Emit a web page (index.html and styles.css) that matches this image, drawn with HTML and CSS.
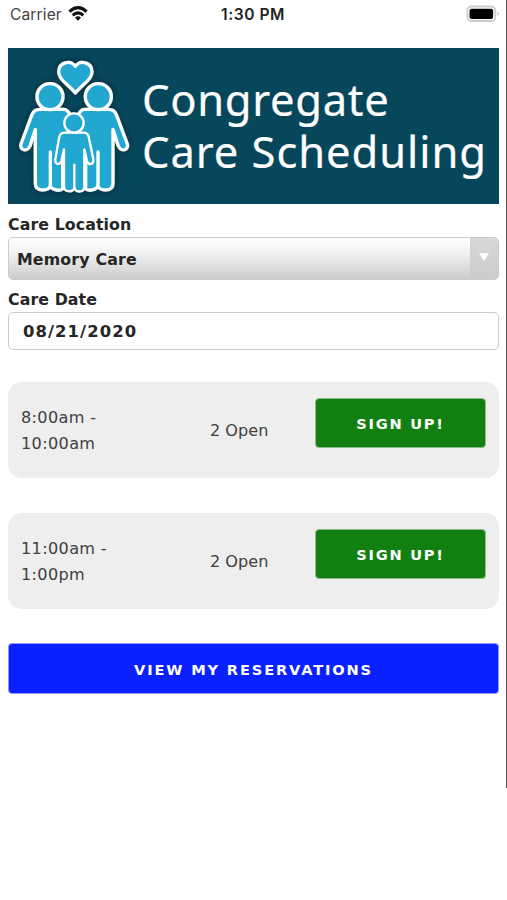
FILE: index.html
```html
<!DOCTYPE html>
<html lang="en">
<head>
<meta charset="utf-8">
<title>Congregate Care Scheduling</title>
<link rel="stylesheet" href="styles.css">
</head>
<body>
<div class="screen">
  <header class="status">
    <div class="carrier"><span>Carrier</span>
      <svg class="wifi" viewBox="0 0 60 46" width="20" height="15.3"><g fill="none" stroke="#111" stroke-width="9"><path d="M4 17Q30-7 56 17"/><path d="M14 28Q30 13 46 28"/></g><path d="M21 35Q30 27 39 35L30 44Z" fill="#111"/></svg>
    </div>
    <time class="clock">1:30 PM</time>
    <div class="power"><svg width="34" height="18" viewBox="0 0 34 18"><rect x="1.3" y="1.5" width="28" height="14.5" rx="4" fill="#fff" stroke="#ccc" stroke-width="1.8"/><rect x="3.5" y="3.7" width="23.6" height="10.2" rx="2" fill="#000"/><path d="M31.4 6.7q2.8 2 0 4z" fill="#bbb"/></svg></div>
  </header>
  <main>
    <div class="banner">
      <svg class="family" viewBox="24 24 396 468" width="132" height="156">
        <defs>
          <g id="adult">
            <path d="M120 208H191C203 208 208 218 212 228L220 250V430Q211 451 192 444Q179 454 166 449Q156 447 151 438Q147 450 127 450Q106 450 106 430V268L90 318C82 338 57 330 63 312L96 224Q102 208 120 208Z"/>
            <circle cx="150" cy="170" r="39"/>
            <path d="M151 336V438M188 350V440" fill="none"/>
          </g>
          <filter id="glow" x="-15%" y="-15%" width="130%" height="130%"><feDropShadow dx="0" dy="0" stdDeviation="9" flood-color="#001b28" flood-opacity=".7"/></filter>
        </defs>
        <g fill="#20a8d0" stroke="#fff" stroke-width="10" stroke-linejoin="round" stroke-linecap="round" filter="url(#glow)">
          <path d="M226 159Q217 148 199 132Q174 110 176 93C178 67 211 58 226 79C241 58 274 67 276 93Q278 110 253 132Q235 148 226 159Z"/>
          <use href="#adult"/>
          <use href="#adult" transform="translate(445 0) scale(-1 1)"/>
          <g stroke-width="7">
            <path d="M195 278H250Q263 278 266 290L280 358C282 374 265 377 261 363L253 328V441C253 458 230 458 224 446C216 458 193 456 192 441V328L184 363C180 377 163 373 166 358L178 290Q181 278 195 278Z"/>
            <circle cx="222" cy="249" r="29"/>
            <path d="M223 374V446" fill="none"/>
          </g>
        </g>
      </svg>
      <h1 class="title"><span class="line1">Congregate</span><span class="line2">Care Scheduling</span></h1>
    </div>
    <div class="label">Care Location</div>
    <div class="select"><span>Memory Care</span><i class="arrow"><svg width="10" height="8" viewBox="0 0 10 8"><path d="M0 0H10L5 8Z" fill="#fff"/></svg></i></div>
    <div class="label date-label">Care Date</div>
    <div class="date">08/21/2020</div>
    <section class="slot"><div class="time">8:00am -<br>10:00am</div><div class="open">2 Open</div><button class="btn signup">SIGN UP!</button></section>
    <section class="slot"><div class="time">11:00am -<br>1:00pm</div><div class="open">2 Open</div><button class="btn signup">SIGN UP!</button></section>
    <button class="btn view">VIEW MY RESERVATIONS</button>
  </main>
</div>
</body>
</html>
```
FILE: styles.css
```css
* { box-sizing: border-box; }
body { margin: 0; background: #fff; color: #262626; font-family: "DejaVu Sans", Verdana, sans-serif; }
.screen { height: 788px; border-right: 1px solid #555; }
.status { height: 48px; padding: 5px 8px 0 10px; display: grid; grid-template-columns: 1fr auto 1fr; align-items: start; font: 15.6px/20px Inter, sans-serif; }
.carrier { display: flex; gap: 6px; color: #444; letter-spacing: .1px; }
.wifi { margin-top: 1px; }
.clock { font-weight: 600; color: #222; letter-spacing: .55px; position: relative; left: -1px; }
.power { justify-self: end; height: 18px; position: relative; left: 2px; }
main { padding: 0 7px 0 8px; }
.banner { height: 156px; display: flex; background: #07475c; overflow: hidden; }
.family { flex: none; }
.title { margin: 25px 0 0 2px; font: 400 43.5px/52px "Noto Sans", sans-serif; color: #fff; white-space: nowrap; -webkit-text-stroke: .2px #fff; }
.title span { display: block; }
.line1 { letter-spacing: .7px; }
.line2 { letter-spacing: .95px; }
.label { font-size: 15.8px; line-height: 20px; font-weight: bold; margin-top: 11px; letter-spacing: .08px; }
.select { height: 43px; margin-top: 2px; border: 1px solid #ccc; border-radius: 5px; background: linear-gradient(#fff, #f2f2f2 35%, #ccc); display: flex; justify-content: space-between; align-items: center; padding-left: 8px; font-weight: bold; font-size: 15.8px; letter-spacing: .15px; overflow: hidden; }
.select span { padding-top: 2px; }
.arrow { width: 28px; height: 100%; background: linear-gradient(#d8d8d8, #ccc); display: flex; justify-content: center; align-items: flex-start; padding-top: 15px; }
.date-label { margin-top: 10px; }
.date { height: 38px; margin-top: 2px; border: 1px solid #ccc; border-radius: 5px; padding-left: 14px; line-height: 37px; font-size: 16.4px; font-weight: bold; letter-spacing: 1.1px; }
.slot { height: 96px; margin-top: 35px; background: #eee; border-radius: 14px; padding: 16px 13px 0 13px; display: grid; grid-template-columns: 189px 1fr 171px; font-size: 16.1px; letter-spacing: .35px; color: #404040; }
.date + .slot { margin-top: 32px; height: 96px; }
.time { padding-top: 7px; line-height: 25.6px; }
.open { padding-top: 20px; line-height: 26px; letter-spacing: 0; }
.btn { height: 50px; border-radius: 4px; border: 1px solid #8bbd8b; padding: 1px 0 0; color: #fff; font: bold 14.6px/47px "DejaVu Sans", sans-serif; letter-spacing: 1.75px; }
.signup { background: #118011; }
.view { display: block; width: 100%; height: 51px; padding-top: 2px; margin-top: 34px; background: #0a20ff; border-color: #8c96ff; letter-spacing: 1.85px; }
```
